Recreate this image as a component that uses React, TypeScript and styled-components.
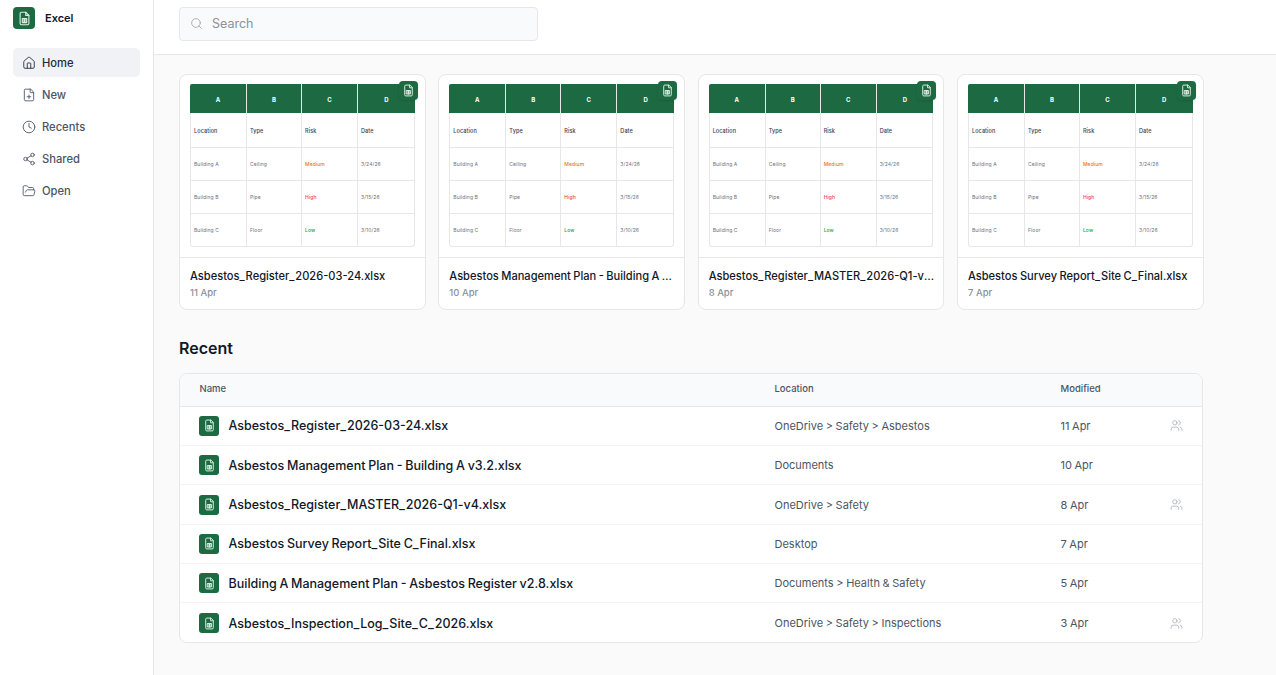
import React from 'react';
import styled, { createGlobalStyle } from 'styled-components';
import { House, FilePlus, Clock, Share2, FolderOpen, Search, Users } from 'lucide-react';

const Global = createGlobalStyle`
  html, body { margin: 0; padding: 0; height: 100%; }
  body { font-family: Inter, "Liberation Sans", sans-serif; background: #fafafa; color: #111827; overflow: hidden; -webkit-font-smoothing: antialiased; }
  * { box-sizing: border-box; }
`;

const Page = styled.div`
  display: flex;
  width: 1276px;
  height: 675px;
`;
const Sidebar = styled.aside`
  width: 154px;
  flex: none;
  background: #fff;
  border-right: 1px solid #e5e7eb;
  padding: 7px 13px;
  display: flex;
  flex-direction: column;
`;
const Brand = styled.div`
  display: flex;
  align-items: center;
  gap: 10px;
  height: 22px;
  margin-bottom: 19px;
`;
const BrandName = styled.span`
  font-size: 11px;
  font-weight: 600;
  color: #111827;
`;
const IconTile = styled.div<{ $size: number; $radius: number }>`
  width: ${p => p.$size}px;
  height: ${p => p.$size}px;
  border-radius: ${p => p.$radius}px;
  background: #1d6a42;
  display: flex;
  align-items: center;
  justify-content: center;
  flex: none;
`;
const Nav = styled.nav`
  display: flex;
  flex-direction: column;
  gap: 3px;
`;
const NavItem = styled.a<{ $active?: boolean }>`
  display: flex;
  align-items: center;
  gap: 6px;
  height: 29px;
  padding-left: 9px;
  border-radius: 5px;
  font-size: 11.2px;
  font-weight: 500;
  color: ${p => (p.$active ? '#1f2937' : '#4b5563')};
  background: ${p => (p.$active ? '#f1f2f6' : 'transparent')};
  svg { color: ${p => (p.$active ? '#1f2937' : '#4b5563')}; }
`;
const Main = styled.main`
  flex: 1;
  min-width: 0;
  display: flex;
  flex-direction: column;
`;
const TopBar = styled.header`
  height: 55px;
  flex: none;
  background: #fff;
  border-bottom: 1px solid #e5e7eb;
  padding: 7px 25px;
`;
const SearchBox = styled.div`
  width: 359px;
  height: 34px;
  display: flex;
  align-items: center;
  gap: 9px;
  padding: 0 0 1px 10px;
  background: #f9fafb;
  border: 1px solid #e5e7eb;
  border-radius: 4px;
  font-size: 12.5px;
  color: #8b919c;
  svg { color: #9ca3af; }
`;
const Content = styled.div`
  width: 1049px;
  padding: 19px 0 0 25px;
`;
const Cards = styled.div`
  display: grid;
  grid-template-columns: repeat(4, 246.67px);
  column-gap: 12.67px;
`;
const Card = styled.article`
  height: 236px;
  background: #fff;
  border: 1px solid #e5e7eb;
  border-radius: 8px;
  position: relative;
`;
const Preview = styled.div`
  height: 183px;
  padding: 9px 10px;
  border-bottom: 1px solid #e5e7eb;
`;
const Sheet = styled.div`
  height: 163px;
  border: 1px solid #e5e7eb;
  border-top: 0;
  border-radius: 2px 2px 3px 3px;
  display: grid;
  grid-template-columns: 56px 55px 56px 1fr;
  grid-template-rows: 29px 35px 33px 33px 1fr;
`;
const HeadCell = styled.div`
  background: #1d6a42;
  color: #fff;
  font-size: 6px;
  font-weight: 700;
  padding-top: 1px;
  display: flex;
  align-items: center;
  justify-content: center;
  border-right: 1px solid #e5e7eb;
  &:first-child { margin-left: -1px; border-top-left-radius: 2px; }
  &:nth-child(4) { margin-right: -1px; border-right: 0; border-top-right-radius: 2px; }
`;
const Cell = styled.div<{ $tone?: string; $strong?: boolean; $last?: boolean; $end?: boolean }>`
  display: flex;
  align-items: center;
  padding-left: 3px;
  padding-top: ${p => (p.$strong ? 1 : 0)}px;
  font-size: ${p => (p.$strong ? 5.5 : 5)}px;
  letter-spacing: 0.1px;
  font-weight: ${p => (p.$strong || p.$tone ? 500 : 400)};
  color: ${p => p.$tone || (p.$strong ? '#374151' : '#6b7280')};
  border-right: ${p => (p.$last ? '0' : '1px solid #e5e7eb')};
  border-bottom: ${p => (p.$end ? '0' : '1px solid #e5e7eb')};
`;
const Badge = styled.div`
  position: absolute;
  top: 6px;
  right: 7px;
  width: 19px;
  height: 19px;
  border-radius: 4px;
  background: #1d6a42;
  box-shadow: 0 1px 2px rgba(0, 0, 0, 0.12);
  display: flex;
  align-items: center;
  justify-content: center;
`;
const CardFoot = styled.div`
  padding: 11.4px 8.5px 0 10px;
`;
const CardTitle = styled.div`
  font-size: 11.1px;
  font-weight: 500;
  line-height: 14px;
  word-spacing: -0.5px;
  color: #111827;
  white-space: nowrap;
  overflow: hidden;
  text-overflow: ellipsis;
`;
const CardDate = styled.div`
  font-size: 9.5px;
  font-weight: 500;
  line-height: 12px;
  color: #8b919c;
  margin-top: 4px;
`;
const Heading = styled.h2`
  margin: 28px 0 15px;
  font-size: 16px;
  font-weight: 600;
  line-height: 20px;
  color: #111827;
`;
const Table = styled.section`
  width: 1024px;
  height: 270px;
  background: #fff;
  border: 1px solid #e5e7eb;
  border-radius: 8px;
  overflow: hidden;
`;
const HeadRow = styled.div`
  display: grid;
  grid-template-columns: 575px 286px 1fr 32px;
  align-items: center;
  height: 32.8px;
  padding: 0 0 3px 19.5px;
  background: #f9fafb;
  border-bottom: 1px solid #e5e7eb;
  font-size: 9.5px;
  font-weight: 500;
  color: #4b5563;
`;
const Row = styled.div`
  display: grid;
  grid-template-columns: 575.5px 286px 1fr 32px;
  align-items: center;
  height: 39.33px;
  padding-left: 19px;
  border-bottom: 1px solid #f3f4f6;
  &:last-child { border-bottom: 0; }
`;
const NameCell = styled.div`
  display: flex;
  align-items: center;
  gap: 9.5px;
  font-size: 12.5px;
  font-weight: 500;
  word-spacing: -0.6px;
  color: #111827;
`;
const Meta = styled.div`
  font-size: 11px;
  word-spacing: -0.5px;
  color: #4b5563;
`;
const SharedCell = styled.div`
  color: #9ca3af;
  display: flex;
`;
const Underscore = styled.span`
  letter-spacing: 0.95px;
`;

const FileName = ({ text }: { text: string }) => (
  <span>
    {text.split('_').map((part, i) => (
      <React.Fragment key={i}>
        {i > 0 && <Underscore>_</Underscore>}
        {part}
      </React.Fragment>
    ))}
  </span>
);

const ExcelGlyph = ({ size }: { size: number }) => (
  <svg width={size} height={size} viewBox="0 0 24 24" fill="none" stroke="#d9ece1" strokeWidth="1.8" strokeLinecap="round" strokeLinejoin="round">
    <path d="M14 2H7a2 2 0 0 0-2 2v16a2 2 0 0 0 2 2h10a2 2 0 0 0 2-2V7z" />
    <path d="M14 2v5h5" />
    <path d="M8.5 12h7v6.5h-7z" fill="#d9ece1" fillOpacity=".55" />
    <path d="M12 12v6.5" />
  </svg>
);

const sheetRows = [
  ['Building A', 'Ceiling', 'Medium', '3/24/26', '#ea7317'],
  ['Building B', 'Pipe', 'High', '3/15/26', '#ef3b45'],
  ['Building C', 'Floor', 'Low', '3/10/26', '#16a34a'],
];
const cards = [
  ['Asbestos_Register_2026-03-24.xlsx', '11 Apr'],
  ['Asbestos Management Plan - Building A v3.2.xlsx', '10 Apr'],
  ['Asbestos_Register_MASTER_2026-Q1-v4.xlsx', '8 Apr'],
  ['Asbestos Survey Report_Site C_Final.xlsx', '7 Apr'],
];
const rows = [
  ['Asbestos_Register_2026-03-24.xlsx', 'OneDrive > Safety > Asbestos', '11 Apr', true],
  ['Asbestos Management Plan - Building A v3.2.xlsx', 'Documents', '10 Apr', false],
  ['Asbestos_Register_MASTER_2026-Q1-v4.xlsx', 'OneDrive > Safety', '8 Apr', true],
  ['Asbestos Survey Report_Site C_Final.xlsx', 'Desktop', '7 Apr', false],
  ['Building A Management Plan - Asbestos Register v2.8.xlsx', 'Documents > Health & Safety', '5 Apr', false],
  ['Asbestos_Inspection_Log_Site_C_2026.xlsx', 'OneDrive > Safety > Inspections', '3 Apr', true],
] as const;
const nav = [
  ['Home', House],
  ['New', FilePlus],
  ['Recents', Clock],
  ['Shared', Share2],
  ['Open', FolderOpen],
] as const;

export default function App() {
  return (
    <Page>
      <Global />
      <Sidebar>
        <Brand>
          <IconTile $size={22} $radius={4}><ExcelGlyph size={15} /></IconTile>
          <BrandName>Excel</BrandName>
        </Brand>
        <Nav>
          {nav.map(([label, Icon], i) => (
            <NavItem key={label} $active={i === 0}>
              <Icon size={14} strokeWidth={1.5} />
              {label}
            </NavItem>
          ))}
        </Nav>
      </Sidebar>
      <Main>
        <TopBar>
          <SearchBox>
            <Search size={13} strokeWidth={1.5} />
            Search
          </SearchBox>
        </TopBar>
        <Content>
          <Cards>
            {cards.map(([title, date]) => (
              <Card key={title}>
                <Preview>
                  <Sheet>
                    {['A', 'B', 'C', 'D'].map(h => <HeadCell key={h}>{h}</HeadCell>)}
                    {['Location', 'Type', 'Risk', 'Date'].map((h, i) => (
                      <Cell key={h} $strong $last={i === 3}>{h}</Cell>
                    ))}
                    {sheetRows.map((r, ri) => (
                      <React.Fragment key={r[0]}>
                        <Cell $end={ri === 2}>{r[0]}</Cell>
                        <Cell $end={ri === 2}>{r[1]}</Cell>
                        <Cell $end={ri === 2} $tone={r[4]}>{r[2]}</Cell>
                        <Cell $end={ri === 2} $last>{r[3]}</Cell>
                      </React.Fragment>
                    ))}
                  </Sheet>
                </Preview>
                <Badge><ExcelGlyph size={13} /></Badge>
                <CardFoot>
                  <CardTitle><FileName text={title} /></CardTitle>
                  <CardDate>{date}</CardDate>
                </CardFoot>
              </Card>
            ))}
          </Cards>
          <Heading>Recent</Heading>
          <Table>
            <HeadRow>
              <span>Name</span>
              <span>Location</span>
              <span>Modified</span>
              <span />
            </HeadRow>
            {rows.map(([name, loc, mod, shared]) => (
              <Row key={name}>
                <NameCell>
                  <IconTile $size={20} $radius={3}><ExcelGlyph size={13} /></IconTile>
                  <FileName text={name} />
                </NameCell>
                <Meta>{loc}</Meta>
                <Meta>{mod}</Meta>
                <SharedCell>{shared && <Users size={13} strokeWidth={1.25} />}</SharedCell>
              </Row>
            ))}
          </Table>
        </Content>
      </Main>
    </Page>
  );
}
